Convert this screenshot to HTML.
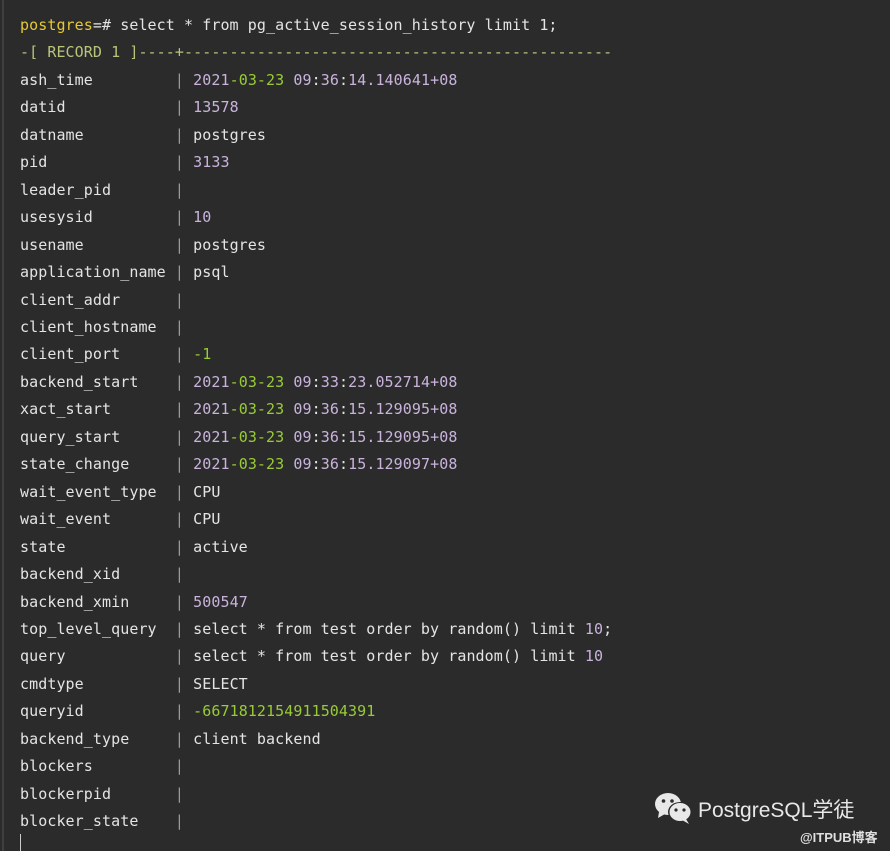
<!DOCTYPE html>
<html><head><meta charset="utf-8"><style>
html,body{margin:0;padding:0}
body{width:890px;height:851px;background:#2b2b2b;position:relative;overflow:hidden}
.bl{position:absolute;left:2px;top:0;width:2px;height:851px;background:#404040}
pre{position:absolute;left:20px;top:12px;margin:0;font-family:"DejaVu Sans Mono","Liberation Mono",monospace;font-size:15px;letter-spacing:0.08px;line-height:27.45px;color:#e4e4e4}
.y{color:#e6c832}.p{color:#c9b3dc}.g{color:#98cc34}.s{color:#9a9a9a}.d{color:#b8c47a}
.cur{position:absolute;left:20px;top:834px;width:1px;height:17px;background:#ccc}
.wm{position:absolute;left:698px;top:794px;color:#e8e8e8;font-family:"Liberation Sans","Noto Sans CJK SC",sans-serif;font-size:21px}
.wm2{position:absolute;left:800px;top:827px;color:#e0e0e0;font-family:"Liberation Sans","Noto Sans CJK SC",sans-serif;font-size:13px;font-weight:bold}
</style></head><body>
<div class="bl"></div>
<pre><span class="y">postgres</span>=# select * from pg_active_session_history limit 1;
<span class="d">-[ RECORD 1 ]----+-----------------------------------------------</span>
ash_time         <span class="s">|</span> <span class="p">2021</span><span class="g">-03-23</span> <span class="p">09</span>:<span class="p">36</span>:<span class="p">14.140641+08</span>
datid            <span class="s">|</span> <span class="p">13578</span>
datname          <span class="s">|</span> postgres
pid              <span class="s">|</span> <span class="p">3133</span>
leader_pid       <span class="s">|</span>
usesysid         <span class="s">|</span> <span class="p">10</span>
usename          <span class="s">|</span> postgres
application_name <span class="s">|</span> psql
client_addr      <span class="s">|</span>
client_hostname  <span class="s">|</span>
client_port      <span class="s">|</span> <span class="g">-1</span>
backend_start    <span class="s">|</span> <span class="p">2021</span><span class="g">-03-23</span> <span class="p">09</span>:<span class="p">33</span>:<span class="p">23.052714+08</span>
xact_start       <span class="s">|</span> <span class="p">2021</span><span class="g">-03-23</span> <span class="p">09</span>:<span class="p">36</span>:<span class="p">15.129095+08</span>
query_start      <span class="s">|</span> <span class="p">2021</span><span class="g">-03-23</span> <span class="p">09</span>:<span class="p">36</span>:<span class="p">15.129095+08</span>
state_change     <span class="s">|</span> <span class="p">2021</span><span class="g">-03-23</span> <span class="p">09</span>:<span class="p">36</span>:<span class="p">15.129097+08</span>
wait_event_type  <span class="s">|</span> CPU
wait_event       <span class="s">|</span> CPU
state            <span class="s">|</span> active
backend_xid      <span class="s">|</span>
backend_xmin     <span class="s">|</span> <span class="p">500547</span>
top_level_query  <span class="s">|</span> select * from test order by random() limit <span class="p">10</span>;
query            <span class="s">|</span> select * from test order by random() limit <span class="p">10</span>
cmdtype          <span class="s">|</span> SELECT
queryid          <span class="s">|</span> <span class="g">-6671812154911504391</span>
backend_type     <span class="s">|</span> client backend
blockers         <span class="s">|</span>
blockerpid       <span class="s">|</span>
blocker_state    <span class="s">|</span></pre>
<div class="cur"></div>
<svg style="position:absolute;left:654px;top:792px" width="40" height="34" viewBox="0 0 40 34">
<ellipse cx="14" cy="12" rx="13" ry="11" fill="#e8e8e8"/>
<path d="M5 20 L4 26 L11 22Z" fill="#e8e8e8"/>
<ellipse cx="26" cy="20" rx="12" ry="10" fill="#2b2b2b"/>
<ellipse cx="26" cy="20" rx="10.5" ry="9" fill="#e8e8e8"/>
<path d="M32 27 L35 32 L28 28Z" fill="#e8e8e8"/>
<circle cx="9.5" cy="9" r="1.8" fill="#2b2b2b"/><circle cx="18" cy="9" r="1.8" fill="#2b2b2b"/>
<circle cx="22" cy="18" r="1.6" fill="#2b2b2b"/><circle cx="30" cy="18" r="1.6" fill="#2b2b2b"/>
</svg>
<div class="wm">PostgreSQL学徒</div>
<div class="wm2">@ITPUB博客</div>
</body></html>
